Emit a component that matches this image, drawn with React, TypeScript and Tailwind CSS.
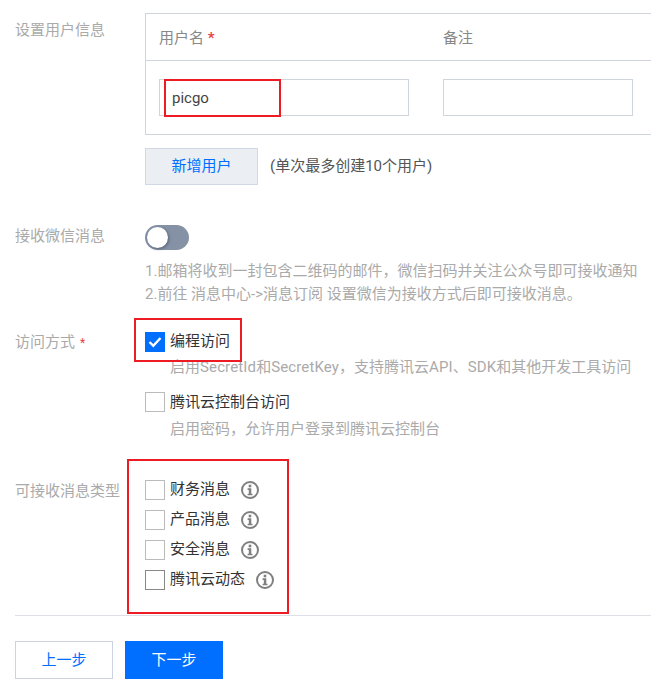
import React from 'react';

const InfoIcon = () => (
  <svg width="18" height="18" viewBox="0 0 18 18" className="shrink-0">
    <circle cx="9" cy="9" r="8" fill="none" stroke="#808080" strokeWidth="2" />
    <rect x="7.7" y="3.7" width="2.6" height="2.6" fill="#808080" />
    <path d="M6.6 7.3h3.7v5.4h1.2v1.6H6.6v-1.6h1.2V8.9H6.6z" fill="#808080" />
  </svg>
);

const FormRow: React.FC<{ label: string; required?: boolean; className?: string; children: React.ReactNode }> = ({
  label,
  required,
  className,
  children,
}) => (
  <div className={`flex ${className ?? ''}`}>
    <div className="w-[145px] shrink-0 pl-[15px] text-[15px] text-[#aaaaaa] leading-[22px]">
      {label}
      {required && <span className="ml-[5px] text-[12px] text-[#e54545]">*</span>}
    </div>
    <div className="flex-1 min-w-0">{children}</div>
  </div>
);

const CheckItem: React.FC<{ label: string; dark?: boolean }> = ({ label, dark }) => (
  <div className="flex items-center h-[20px] mb-[10px]">
    <span className={`w-[20px] h-[20px] border ${dark ? 'border-[#888888]' : 'border-[#bbbbbb]'} bg-white shrink-0`} />
    <span className="ml-[5px] mr-[11px] pb-[1px] text-[15px] text-[#333333]">{label}</span>
    <InfoIcon />
  </div>
);

export default function App() {
  return (
    <div
      className="relative w-[651px] h-[697px] overflow-hidden bg-white"
      style={{ fontFamily: 'Roboto, "Noto Sans CJK SC", sans-serif' }}
    >
      <div className="pt-[13px]">
        {/* 用户信息 */}
        <FormRow label="设置用户信息" className="[&>div:first-child]:pt-[6px]">
          <div className="w-[520px] border border-[#d0d4dc] text-[15px]">
            <div className="flex items-center h-[47px] border-b border-[#d0d4dc] pl-[13px] pt-[2px] text-[#888888]">
              <div className="w-[284px]">
                用户名 <span className="font-bold text-[#e54545]">*</span>
              </div>
              <div>备注</div>
            </div>
            <div className="flex h-[73px] items-center pl-[13px]">
              <div className="w-[250px] h-[37px] border border-[#d0d4dc] flex items-center pl-[12px] pt-[2px] text-[#444444]">picgo</div>
              <div className="ml-[34px] w-[190px] h-[37px] border border-[#d0d4dc]" />
            </div>
          </div>
          <div className="flex items-center mt-[13px]">
            <button className="w-[113px] h-[37px] border border-[#d0d8e4] bg-[#ebeef3] text-[15px] text-[#006eff]">新增用户</button>
            <span className="ml-[12px] text-[15px] text-[#555555]">(单次最多创建10个用户)</span>
          </div>
        </FormRow>

        {/* 微信消息 */}
        <FormRow label="接收微信消息" className="mt-[40px]">
          <div className="w-[44px] h-[25px] rounded-full bg-[#8592a6] relative">
            <span className="absolute left-[2px] top-[2px] w-[21px] h-[21px] rounded-full bg-white shadow-[1px_1px_3px_rgba(40,50,70,0.5)]" />
          </div>
          <div className="mt-[10px] text-[15px] leading-[23px] text-[#aaaaaa] whitespace-nowrap">
            <p>1.邮箱将收到一封包含二维码的邮件，微信扫码并关注公众号即可接收通知</p>
            <p>2.前往 消息中心-&gt;消息订阅 设置微信为接收方式后即可接收消息。</p>
          </div>
        </FormRow>

        {/* 访问方式 */}
        <FormRow label="访问方式" required className="mt-[25px]">
          <div className="flex items-center h-[20px] mt-[1px]">
            <span className="w-[20px] h-[20px] bg-[#006eff] flex items-center justify-center shrink-0">
              <svg width="14" height="12" viewBox="0 0 14 12">
                <path d="M1.5 6l3.8 3.8L12.5 2" fill="none" stroke="#ffffff" strokeWidth="2.4" />
              </svg>
            </span>
            <span className="ml-[5px] pb-[2px] text-[15px] text-[#333333]">编程访问</span>
          </div>
          <p className="mt-[3px] ml-[25px] text-[15px] leading-[24px] text-[#aaaaaa] whitespace-nowrap">
            启用<span className="tracking-[0.13px]">SecretId</span>和<span className="tracking-[0.13px]">SecretKey</span>，支持腾讯云<span className="tracking-[0.13px]">API</span>、<span className="tracking-[0.13px]">SDK</span>和其他开发工具访问
          </p>
          <div className="flex items-center h-[20px] mt-[13px]">
            <span className="w-[20px] h-[20px] border border-[#bbbbbb] shrink-0" />
            <span className="ml-[5px] text-[15px] text-[#333333]">腾讯云控制台访问</span>
          </div>
          <p className="mt-[5px] ml-[25px] mb-[1px] text-[15px] leading-[24px] text-[#aaaaaa]">启用密码，允许用户登录到腾讯云控制台</p>
        </FormRow>

        {/* 消息类型 */}
        <FormRow label="可接收消息类型" className="mt-[38px]">
          <CheckItem label="财务消息" />
          <CheckItem label="产品消息" />
          <CheckItem label="安全消息" />
          <CheckItem label="腾讯云动态" dark />
        </FormRow>

        <div className="ml-[15px] mt-[15px] border-t border-[#dddfe4]" />

        <div className="flex gap-[12px] ml-[15px] mt-[25px]">
          <button className="w-[98px] h-[38px] border border-[#ccd4e4] bg-white text-[15px] text-[#006eff]">上一步</button>
          <button className="w-[98px] h-[38px] bg-[#006eff] text-[15px] text-white">下一步</button>
        </div>
      </div>

      {/* 截图上的红色标注框 */}
      <div className="absolute left-[164px] top-[79px] w-[117px] h-[38px] border-2 border-[#ed1c24]" />
      <div className="absolute left-[134px] top-[318px] w-[108px] h-[44px] border-2 border-[#ed1c24]" />
      <div className="absolute left-[127px] top-[459px] w-[162px] h-[155px] border-2 border-[#ed1c24]" />
    </div>
  );
}
